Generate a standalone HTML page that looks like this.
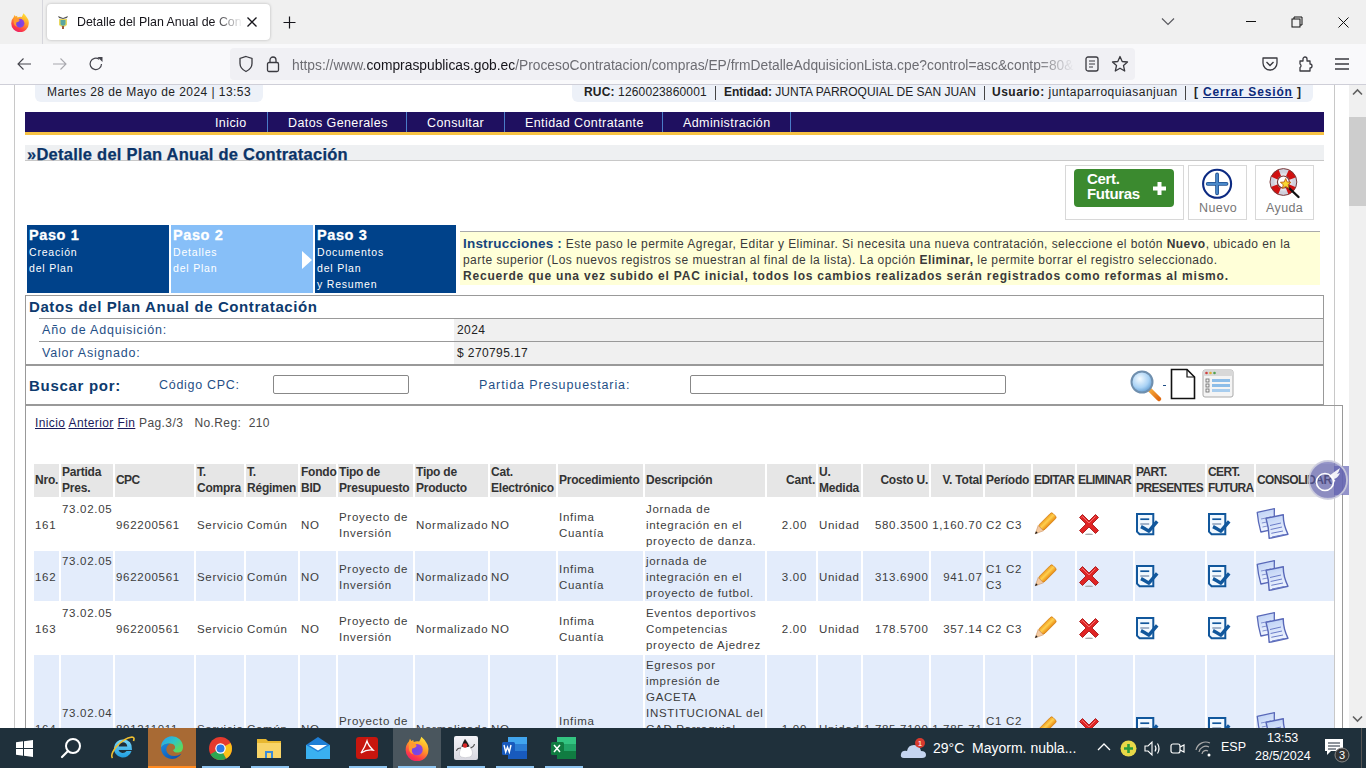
<!DOCTYPE html><html><head><meta charset="utf-8"><style>
*{margin:0;padding:0;box-sizing:border-box}
html,body{width:1366px;height:768px;overflow:hidden;background:#fff;font-family:"Liberation Sans",sans-serif;position:relative}
.a{position:absolute}
.t{position:absolute;white-space:nowrap}
.ff{font-family:"Liberation Sans",sans-serif}
</style></head><body>

<div class="a" style="left:0;top:0;width:1366px;height:44px;background:#f0f0f0"></div>
<div class="a" style="left:0;top:44px;width:1366px;height:40px;background:#f9f9fb"></div>
<div class="a" style="left:0;top:84px;width:1366px;height:1px;background:#cfcfd8"></div>
<svg class="a" style="left:10px;top:12px" width="20" height="20" viewBox="0 0 24 24"><defs><linearGradient id="ffa" x1="0.8" y1="0" x2="0.3" y2="1"><stop offset="0" stop-color="#ffe838"/><stop offset="0.45" stop-color="#ff9a28"/><stop offset="0.8" stop-color="#ff3a48"/><stop offset="1" stop-color="#e8206a"/></linearGradient><radialGradient id="ffap" cx="0.4" cy="0.6" r="0.7"><stop offset="0" stop-color="#6a48e8"/><stop offset="1" stop-color="#9a40d8"/></radialGradient></defs><path d="M16 1.5 Q19 4 20.5 7 Q23 10 22.5 14 A10.5 10.5 0 0 1 1.5 13.5 Q1.5 9 4.5 6 L5.5 3.5 L6.8 5.5 L8.5 4.5 L9 6.5 Q11.5 5.5 14 6 Q15.5 3.5 16 1.5Z" fill="url(#ffa)"/><circle cx="12" cy="13.5" r="5.3" fill="url(#ffap)"/><path d="M4.5 8 Q7 6.5 10 8 Q12.5 9.5 11 11 Q9.5 12 7.5 12.5 Q6.5 16 9 18 Q5 17 4.5 13Z" fill="#ff9a30"/></svg>
<div class="a" style="left:42px;top:0;width:1px;height:44px;background:#d6d6dc"></div>
<div class="a" style="left:47px;top:4px;width:223px;height:36px;background:#fff;border-radius:4px;box-shadow:0 0 3px rgba(0,0,0,0.25)"></div>
<svg class="a" style="left:56px;top:14px" width="14" height="16" viewBox="0 0 14 16">
<path d="M2 2 L7 4 L12 2 L11 4 L7 5 L3 4Z" fill="#555"/><path d="M3 5 H11 V11 Q7 15 3 11Z" fill="#e8d860"/><path d="M4.5 6 H9.5 V10.5 Q7 13 4.5 10.5Z" fill="#5aa6a0"/><rect x="6" y="12" width="2" height="3" fill="#a05a3a"/></svg>
<div class="t" style="left:77px;top:14.5px;font-size:12.4px;color:#15141a;width:166px;overflow:hidden;-webkit-mask-image:linear-gradient(to right,#000 82%,transparent 100%)">Detalle del Plan Anual de Contratación</div>
<svg class="a" style="left:246px;top:16px" width="12" height="12" viewBox="0 0 12 12"><path d="M1.5 1.5 L10.5 10.5 M10.5 1.5 L1.5 10.5" stroke="#15141a" stroke-width="1.3"/></svg>
<svg class="a" style="left:283px;top:16px" width="13" height="13" viewBox="0 0 13 13"><path d="M6.5 0.5 V12.5 M0.5 6.5 H12.5" stroke="#15141a" stroke-width="1.2"/></svg>
<svg class="a" style="left:1161px;top:17px" width="14" height="9" viewBox="0 0 14 9"><path d="M1 1.5 L7 7.5 L13 1.5" stroke="#5a5a60" stroke-width="1.2" fill="none"/></svg>
<div class="a" style="left:1246px;top:21px;width:10px;height:1px;background:#111"></div>
<svg class="a" style="left:1291px;top:16px" width="12" height="12" viewBox="0 0 12 12"><rect x="1" y="3" width="8" height="8" stroke="#111" fill="none" stroke-width="1"/><path d="M3 3 V1 H11 V9 H9" stroke="#111" fill="none" stroke-width="1"/></svg>
<svg class="a" style="left:1338px;top:17px" width="11" height="11" viewBox="0 0 11 11"><path d="M0.5 0.5 L10.5 10.5 M10.5 0.5 L0.5 10.5" stroke="#111" stroke-width="1"/></svg>
<svg class="a" style="left:16px;top:57px" width="16" height="14" viewBox="0 0 16 14"><path d="M15 7 H2 M7.5 1.5 L2 7 L7.5 12.5" stroke="#45454d" stroke-width="1.1" fill="none"/></svg>
<svg class="a" style="left:52px;top:57px" width="16" height="14" viewBox="0 0 16 14"><path d="M1 7 H14 M8.5 1.5 L14 7 L8.5 12.5" stroke="#a8a8ae" stroke-width="1.1" fill="none"/></svg>
<svg class="a" style="left:88px;top:56px" width="16" height="16" viewBox="0 0 16 16"><path d="M13.5 8 A5.7 5.7 0 1 1 11.2 3.3" stroke="#45454d" stroke-width="1.2" fill="none"/><path d="M9.5 1 L14.5 1 L14.5 6 Z" fill="#45454d"/></svg>
<div class="a" style="left:230px;top:48px;width:905px;height:32px;background:#f0f0f4;border-radius:4px"></div>
<svg class="a" style="left:238px;top:55px" width="16" height="18" viewBox="0 0 16 18"><path d="M8 1.5 L14 3.5 V8.5 Q14 13.5 8 16.5 Q2 13.5 2 8.5 V3.5 Z" stroke="#3a3a40" stroke-width="1.3" fill="none"/></svg>
<svg class="a" style="left:266px;top:55px" width="14" height="18" viewBox="0 0 14 18"><rect x="1.5" y="7.5" width="11" height="9" rx="1.5" stroke="#3a3a40" stroke-width="1.3" fill="none"/><path d="M4 7.5 V5 A3 3 0 0 1 10 5 V7.5" stroke="#3a3a40" stroke-width="1.3" fill="none"/></svg>
<div class="t" style="left:292px;top:58px;font-size:13.8px;color:#6d6d73;letter-spacing:0px;width:783px;overflow:hidden;-webkit-mask-image:linear-gradient(to right,#000 95%,transparent 100%)">https://www.<span style="color:#15141a">compraspublicas.gob.ec</span>/ProcesoContratacion/compras/EP/frmDetalleAdquisicionLista.cpe?control=asc&amp;contp=80&amp;</div>
<svg class="a" style="left:1085px;top:56px" width="14" height="16" viewBox="0 0 14 16"><rect x="1" y="1" width="12" height="14" rx="2" stroke="#3a3a40" stroke-width="1.3" fill="none"/><path d="M4 5 H10 M4 8 H10 M4 11 H8" stroke="#3a3a40" stroke-width="1.2"/></svg>
<svg class="a" style="left:1111px;top:55px" width="18" height="18" viewBox="0 0 18 18"><path d="M9 1.5 L11.2 6.5 L16.5 7 L12.5 10.6 L13.7 16 L9 13.2 L4.3 16 L5.5 10.6 L1.5 7 L6.8 6.5 Z" stroke="#3a3a40" stroke-width="1.3" fill="none" stroke-linejoin="round"/></svg>
<svg class="a" style="left:1261px;top:56px" width="18" height="16" viewBox="0 0 18 16"><path d="M2 2 H16 V7 A7 7 0 0 1 2 7 Z" stroke="#3a3a40" stroke-width="1.3" fill="none" stroke-linejoin="round"/><path d="M5.5 6 L9 9.5 L12.5 6" stroke="#3a3a40" stroke-width="1.4" fill="none"/></svg>
<svg class="a" style="left:1298px;top:55px" width="16" height="18" viewBox="0 0 16 18"><path d="M2 6 H5 V4 A2 2 0 0 1 9 4 V6 H12 V9 A2 2 0 0 1 12 13 V16 H2 V12.5 A2 2 0 0 0 2 9 Z" stroke="#3a3a40" stroke-width="1.3" fill="none" stroke-linejoin="round"/></svg>
<svg class="a" style="left:1334px;top:57px" width="16" height="14" viewBox="0 0 16 14"><path d="M1 2 H15 M1 7 H15 M1 12 H15" stroke="#3a3a40" stroke-width="1.4"/></svg>
<div class="a" style="left:14px;top:85px;width:1px;height:643px;background:#c8c8c8"></div>
<div class="a" style="left:1334px;top:85px;width:1px;height:643px;background:#c8c8c8"></div>
<div class="a" style="left:1349px;top:85px;width:17px;height:643px;background:#f0f0f0"></div>
<div class="a" style="left:1349px;top:117px;width:17px;height:89px;background:#cdcdcd"></div>
<svg class="a" style="left:1352px;top:88px" width="11" height="8" viewBox="0 0 11 8"><path d="M1 6.5 L5.5 2 L10 6.5" stroke="#606060" stroke-width="1.6" fill="none"/></svg>
<svg class="a" style="left:1352px;top:715px" width="11" height="8" viewBox="0 0 11 8"><path d="M1 1.5 L5.5 6 L10 1.5" stroke="#606060" stroke-width="1.6" fill="none"/></svg>
<div class="a" style="left:35px;top:85px;width:228px;height:17px;background:#edf1f8;border-radius:0 0 6px 6px"></div>
<div class="t" style="left:47px;top:85px;font-size:12px;color:#222;letter-spacing:0.45px">Martes 28 de Mayo de 2024 | 13:53</div>
<div class="a" style="left:572px;top:85px;width:741px;height:17px;background:#edf1f8;border-radius:0 0 6px 6px"></div>
<div class="t" style="left:584px;top:85px;font-size:12px;color:#222;letter-spacing:0.15px"><b>RUC:</b> 1260023860001</div>
<div class="t" style="left:724px;top:85px;font-size:12px;color:#222;letter-spacing:0.0px"><b>Entidad:</b> JUNTA PARROQUIAL DE SAN JUAN</div>
<div class="t" style="left:992px;top:85px;font-size:12px;color:#222;letter-spacing:0.5px"><b>Usuario:</b> juntaparroquiasanjuan</div>
<div class="t" style="left:1194px;top:85px;font-size:12px;color:#222;letter-spacing:0.85px"><b>[ <span style="color:#0d2a7a;text-decoration:underline">Cerrar Sesión</span> ]</b></div>
<div class="a" style="left:715px;top:86px;width:1px;height:14px;background:#444"></div>
<div class="a" style="left:984px;top:86px;width:1px;height:14px;background:#444"></div>
<div class="a" style="left:1185px;top:86px;width:1px;height:14px;background:#444"></div>
<div class="a" style="left:25px;top:112px;width:1299px;height:20px;background:#1f1060"></div>
<div class="a" style="left:25px;top:132px;width:1299px;height:3px;background:#f6c244"></div>
<div class="a" style="left:267px;top:112px;width:1px;height:20px;background:#4a7cc8"></div>
<div class="a" style="left:406px;top:112px;width:1px;height:20px;background:#4a7cc8"></div>
<div class="a" style="left:504px;top:112px;width:1px;height:20px;background:#4a7cc8"></div>
<div class="a" style="left:662px;top:112px;width:1px;height:20px;background:#4a7cc8"></div>
<div class="a" style="left:790px;top:112px;width:1px;height:20px;background:#4a7cc8"></div>
<div class="t" style="left:215px;top:116px;font-size:12.5px;color:#fff;letter-spacing:0.4px">Inicio</div>
<div class="t" style="left:288px;top:116px;font-size:12.5px;color:#fff;letter-spacing:0.4px">Datos Generales</div>
<div class="t" style="left:427px;top:116px;font-size:12.5px;color:#fff;letter-spacing:0.4px">Consultar</div>
<div class="t" style="left:525px;top:116px;font-size:12.5px;color:#fff;letter-spacing:0.4px">Entidad Contratante</div>
<div class="t" style="left:683px;top:116px;font-size:12.5px;color:#fff;letter-spacing:0.4px">Administración</div>
<div class="a" style="left:25px;top:145px;width:1299px;height:16px;background:#eef0f2;border-bottom:1px solid #c8c8c8"></div>
<div class="t" style="left:27px;top:145px;font-size:16.5px;font-weight:bold;color:#0b3468;letter-spacing:0.25px;-webkit-text-stroke:0.25px #0b3468">&raquo;Detalle del Plan Anual de Contratación</div>
<div class="a" style="left:1065px;top:165px;width:119px;height:55px;border:1px solid #d8d8d8"></div>
<div class="a" style="left:1074px;top:169px;width:100px;height:38px;background:#3b8a2f;border-radius:4px"></div>
<div class="t" style="left:1087px;top:172px;font-size:15px;font-weight:bold;color:#fff;line-height:14.5px;letter-spacing:-0.3px">Cert.<br>Futuras</div>
<svg class="a" style="left:1153px;top:182px" width="13" height="13" viewBox="0 0 13 13"><path d="M6.5 0 V13 M0 6.5 H13" stroke="#fff" stroke-width="4"/></svg>
<div class="a" style="left:1188px;top:165px;width:59px;height:55px;border:1px solid #d8d8d8"></div>
<svg class="a" style="left:1200px;top:167px" width="34" height="34" viewBox="0 0 34 34"><circle cx="17.1" cy="16.8" r="14" fill="#fff" stroke="#0c2a82" stroke-width="2.1"/><path d="M17.1 7.5 V26.3 M7.7 16.8 H26.5" stroke="#1f4f90" stroke-width="3.8" stroke-linecap="round"/><path d="M17.1 7.5 V26.3 M7.7 16.8 H26.5" stroke="#4a88c8" stroke-width="2.2" stroke-linecap="round"/></svg>
<div class="t" style="left:1199px;top:201px;font-size:12.5px;color:#777;letter-spacing:0.4px">Nuevo</div>
<div class="a" style="left:1255px;top:165px;width:59px;height:55px;border:1px solid #d8d8d8"></div>
<svg class="a" style="left:1266px;top:165px" width="36" height="36" viewBox="0 0 36 36"><defs><radialGradient id="lbg" cx="0.5" cy="0.5" r="0.5"><stop offset="0.4" stop-color="#fff"/><stop offset="1" stop-color="#d0d0dc"/></radialGradient></defs>
<circle cx="17.4" cy="17" r="10" fill="none" stroke="url(#lbg)" stroke-width="7"/>
<circle cx="17.4" cy="17" r="10" fill="none" stroke="#d01010" stroke-width="7" stroke-dasharray="7.85 7.85" stroke-dashoffset="-3.9" transform="rotate(0 17.4 17)"/>
<circle cx="17.4" cy="17" r="13.4" fill="none" stroke="#7a3a3a" stroke-width="1"/>
<circle cx="17.4" cy="17" r="6" fill="#fff" stroke="#7a3a3a" stroke-width="1.2"/>
<path d="M22 22 L32.5 32" stroke="#111" stroke-width="2.4" stroke-linecap="round"/>
<path d="M19.7 13.5 L21.2 17 L25 17.3 L22.1 19.7 L23 23.4 L19.7 21.4 L16.4 23.4 L17.3 19.7 L14.4 17.3 L18.2 17 Z" fill="#f8d830" stroke="#c06010" stroke-width="0.9" stroke-linejoin="round"/></svg>
<div class="t" style="left:1266px;top:201px;font-size:12.5px;color:#777;letter-spacing:0.4px">Ayuda</div>
<div class="a" style="left:27px;top:225px;width:142px;height:68px;background:#00428a"></div>
<div class="a" style="left:171px;top:225px;width:142px;height:68px;background:#87bff8"></div>
<div class="a" style="left:315px;top:225px;width:141px;height:68px;background:#00428a"></div>
<div class="t" style="left:29px;top:227px;font-size:14.5px;font-weight:bold;color:#fff;letter-spacing:0.6px;-webkit-text-stroke:0.3px #fff">Paso 1</div>
<div class="t" style="left:29px;top:244px;font-size:10.5px;line-height:16px;color:#fff;letter-spacing:0.8px">Creación<br>del Plan</div>
<div class="t" style="left:173px;top:227px;font-size:14.5px;font-weight:bold;color:#fff;letter-spacing:0.6px;-webkit-text-stroke:0.3px #fff">Paso 2</div>
<div class="t" style="left:173px;top:244px;font-size:10.5px;line-height:16px;color:#fff;letter-spacing:0.8px">Detalles<br>del Plan</div>
<div class="t" style="left:317px;top:227px;font-size:14.5px;font-weight:bold;color:#fff;letter-spacing:0.6px;-webkit-text-stroke:0.3px #fff">Paso 3</div>
<div class="t" style="left:317px;top:244px;font-size:10.5px;line-height:16px;color:#fff;letter-spacing:0.8px">Documentos<br>del Plan<br>y Resumen</div>
<svg class="a" style="left:302px;top:251px" width="10" height="18" viewBox="0 0 10 18"><path d="M0 0 L10 9 L0 18Z" fill="#fff"/></svg>
<div class="a" style="left:460px;top:231px;width:860px;height:54px;background:#ffffd8;border-top:1px solid #aaa"></div>
<div class="t" style="left:463px;top:236px;font-size:12px;line-height:16px;color:#3a3a3a;letter-spacing:0.45px"><b style="color:#17457c;font-size:13.5px;letter-spacing:0.2px">Instrucciones :</b> Este paso le permite Agregar, Editar y Eliminar. Si necesita una nueva contratación, seleccione el botón <b>Nuevo</b>, ubicado en la<br>parte superior (Los nuevos registros se muestran al final de la lista). La opción <b>Eliminar,</b> le permite borrar el registro seleccionado.<br><b style="letter-spacing:0.8px">Recuerde que una vez subido el PAC inicial, todos los cambios realizados serán registrados como reformas al mismo.</b></div>
<div class="a" style="left:25px;top:295px;width:1299px;height:110px;border:1px solid #999;border-width:1px 1px 1px 1px"></div>
<div class="t" style="left:29px;top:298px;font-size:15px;font-weight:bold;color:#0d3a6e;letter-spacing:0.6px">Datos del Plan Anual de Contratación</div>
<div class="a" style="left:39px;top:318px;width:1284px;height:1px;background:#999"></div>
<div class="a" style="left:39px;top:341px;width:1284px;height:1px;background:#999"></div>
<div class="a" style="left:454px;top:319px;width:869px;height:22px;background:#f0f0f0"></div>
<div class="a" style="left:454px;top:342px;width:869px;height:22px;background:#f0f0f0"></div>
<div class="a" style="left:26px;top:364px;width:1297px;height:2px;background:#999"></div>
<div class="t" style="left:42px;top:323px;font-size:12.5px;color:#1f4f86;letter-spacing:0.8px">Año de Adquisición:</div>
<div class="t" style="left:42px;top:346px;font-size:12.5px;color:#1f4f86;letter-spacing:0.8px">Valor Asignado:</div>
<div class="t" style="left:457px;top:323px;font-size:12px;color:#222;letter-spacing:0.4px">2024</div>
<div class="t" style="left:457px;top:346px;font-size:12px;color:#222;letter-spacing:0.4px">$ 270795.17</div>
<div class="t" style="left:29px;top:377px;font-size:15px;font-weight:bold;color:#0d3a6e;letter-spacing:0.7px">Buscar por:</div>
<div class="t" style="left:159px;top:378px;font-size:12.5px;color:#1f4f86;letter-spacing:0.7px">Código CPC:</div>
<div class="a" style="left:273px;top:375px;width:136px;height:19px;border:1px solid #888;border-radius:2px;background:#fff"></div>
<div class="t" style="left:479px;top:378px;font-size:12.5px;color:#1f4f86;letter-spacing:0.9px">Partida Presupuestaria:</div>
<div class="a" style="left:690px;top:375px;width:316px;height:19px;border:1px solid #888;border-radius:2px;background:#fff"></div>
<svg class="a" style="left:1129px;top:369px" width="34" height="34" viewBox="0 0 34 34"><defs><radialGradient id="mg" cx="0.4" cy="0.35" r="0.7"><stop offset="0" stop-color="#f4fbff"/><stop offset="0.6" stop-color="#a9d2f5"/><stop offset="1" stop-color="#5a96cc"/></radialGradient><linearGradient id="hg" x1="0" y1="0" x2="1" y2="1"><stop offset="0" stop-color="#f7b040"/><stop offset="1" stop-color="#e06a10"/></linearGradient></defs><path d="M20 20 L30 30" stroke="url(#hg)" stroke-width="4.5" stroke-linecap="round"/><circle cx="13" cy="13" r="10.5" fill="url(#mg)" stroke="#6f8fae" stroke-width="2"/></svg>
<div class="a" style="left:1163px;top:385px;width:3px;height:1px;background:#1f4f86"></div>
<svg class="a" style="left:1170px;top:368px" width="26" height="32" viewBox="0 0 26 32"><path d="M1.5 1.5 H17 L24.5 9 V30.5 H1.5 Z" fill="#fff" stroke="#111" stroke-width="1.6"/><path d="M17 1.5 V9 H24.5" fill="none" stroke="#111" stroke-width="1.2"/></svg>
<svg class="a" style="left:1202px;top:369px" width="32" height="30" viewBox="0 0 32 30"><rect x="1" y="1" width="30" height="27" rx="2" fill="#f4f4f4" stroke="#aaa"/><rect x="1" y="1" width="30" height="6" rx="2" fill="#d8d8d8"/><circle cx="4.5" cy="4" r="1.3" fill="#d04040"/><circle cx="8.5" cy="4" r="1.3" fill="#e0b030"/><circle cx="12.5" cy="4" r="1.3" fill="#50a050"/><rect x="4" y="10" width="3" height="3" fill="none" stroke="#666" stroke-width="0.8"/><rect x="10" y="10" width="18" height="3" fill="#8cbde8"/><rect x="4" y="15" width="3" height="3" fill="none" stroke="#666" stroke-width="0.8"/><rect x="10" y="15" width="18" height="3" fill="#8cbde8"/><rect x="4" y="20" width="3" height="3" fill="none" stroke="#666" stroke-width="0.8"/><rect x="10" y="20" width="18" height="3" fill="#a8cdee"/></svg>
<div class="a" style="left:25px;top:405px;width:1318px;height:340px;border:1px solid #999;border-bottom:none"></div>
<div class="t" style="left:35px;top:416px;font-size:12px;color:#4a4a4a;letter-spacing:0.4px"><span style="color:#1a1a5a;text-decoration:underline">Inicio</span> <span style="color:#1a1a5a;text-decoration:underline">Anterior</span> <span style="color:#1a1a5a;text-decoration:underline">Fin</span> Pag.3/3 &nbsp; No.Reg: &nbsp;210</div>
<div class="a" style="left:34px;top:464px;width:25px;height:33px;background:#e6e6e6;display:flex;flex-direction:column;justify-content:center;align-items:flex-start;padding:0 0 0 1px"><div style="font-size:12px;font-weight:bold;line-height:16px;color:#333;white-space:nowrap;margin-top:-2px;letter-spacing:-0.22px;text-align:left">Nro.</div></div>
<div class="a" style="left:61px;top:464px;width:52px;height:33px;background:#e6e6e6;display:flex;flex-direction:column;justify-content:center;align-items:flex-start;padding:0 0 0 1px"><div style="font-size:12px;font-weight:bold;line-height:16px;color:#333;white-space:nowrap;margin-top:-2px;letter-spacing:-0.22px;text-align:left">Partida<br>Pres.</div></div>
<div class="a" style="left:115px;top:464px;width:79px;height:33px;background:#e6e6e6;display:flex;flex-direction:column;justify-content:center;align-items:flex-start;padding:0 0 0 1px"><div style="font-size:12px;font-weight:bold;line-height:16px;color:#333;white-space:nowrap;margin-top:-2px;letter-spacing:-0.62px;text-align:left">CPC</div></div>
<div class="a" style="left:196px;top:464px;width:48px;height:33px;background:#e6e6e6;display:flex;flex-direction:column;justify-content:center;align-items:flex-start;padding:0 0 0 1px"><div style="font-size:12px;font-weight:bold;line-height:16px;color:#333;white-space:nowrap;margin-top:-2px;letter-spacing:-0.22px;text-align:left">T.<br>Compra</div></div>
<div class="a" style="left:246px;top:464px;width:52px;height:33px;background:#e6e6e6;display:flex;flex-direction:column;justify-content:center;align-items:flex-start;padding:0 0 0 1px"><div style="font-size:12px;font-weight:bold;line-height:16px;color:#333;white-space:nowrap;margin-top:-2px;letter-spacing:-0.22px;text-align:left">T.<br>Régimen</div></div>
<div class="a" style="left:300px;top:464px;width:36px;height:33px;background:#e6e6e6;display:flex;flex-direction:column;justify-content:center;align-items:flex-start;padding:0 0 0 1px"><div style="font-size:12px;font-weight:bold;line-height:16px;color:#333;white-space:nowrap;margin-top:-2px;letter-spacing:-0.22px;text-align:left">Fondo<br>BID</div></div>
<div class="a" style="left:338px;top:464px;width:75px;height:33px;background:#e6e6e6;display:flex;flex-direction:column;justify-content:center;align-items:flex-start;padding:0 0 0 1px"><div style="font-size:12px;font-weight:bold;line-height:16px;color:#333;white-space:nowrap;margin-top:-2px;letter-spacing:-0.22px;text-align:left">Tipo de<br>Presupuesto</div></div>
<div class="a" style="left:415px;top:464px;width:73px;height:33px;background:#e6e6e6;display:flex;flex-direction:column;justify-content:center;align-items:flex-start;padding:0 0 0 1px"><div style="font-size:12px;font-weight:bold;line-height:16px;color:#333;white-space:nowrap;margin-top:-2px;letter-spacing:-0.22px;text-align:left">Tipo de<br>Producto</div></div>
<div class="a" style="left:490px;top:464px;width:66px;height:33px;background:#e6e6e6;display:flex;flex-direction:column;justify-content:center;align-items:flex-start;padding:0 0 0 1px"><div style="font-size:12px;font-weight:bold;line-height:16px;color:#333;white-space:nowrap;margin-top:-2px;letter-spacing:-0.22px;text-align:left">Cat.<br>Electrónico</div></div>
<div class="a" style="left:558px;top:464px;width:85px;height:33px;background:#e6e6e6;display:flex;flex-direction:column;justify-content:center;align-items:flex-start;padding:0 0 0 1px"><div style="font-size:12px;font-weight:bold;line-height:16px;color:#333;white-space:nowrap;margin-top:-2px;letter-spacing:-0.22px;text-align:left">Procedimiento</div></div>
<div class="a" style="left:645px;top:464px;width:120px;height:33px;background:#e6e6e6;display:flex;flex-direction:column;justify-content:center;align-items:flex-start;padding:0 0 0 1px"><div style="font-size:12px;font-weight:bold;line-height:16px;color:#333;white-space:nowrap;margin-top:-2px;letter-spacing:-0.22px;text-align:left">Descripción</div></div>
<div class="a" style="left:767px;top:464px;width:49px;height:33px;background:#e6e6e6;display:flex;flex-direction:column;justify-content:center;align-items:flex-end;padding:0 1px 0 1px"><div style="font-size:12px;font-weight:bold;line-height:16px;color:#333;white-space:nowrap;margin-top:-2px;letter-spacing:-0.22px;text-align:right">Cant.</div></div>
<div class="a" style="left:818px;top:464px;width:43px;height:33px;background:#e6e6e6;display:flex;flex-direction:column;justify-content:center;align-items:flex-start;padding:0 0 0 1px"><div style="font-size:12px;font-weight:bold;line-height:16px;color:#333;white-space:nowrap;margin-top:-2px;letter-spacing:-0.22px;text-align:left">U.<br>Medida</div></div>
<div class="a" style="left:863px;top:464px;width:66px;height:33px;background:#e6e6e6;display:flex;flex-direction:column;justify-content:center;align-items:flex-end;padding:0 1px 0 1px"><div style="font-size:12px;font-weight:bold;line-height:16px;color:#333;white-space:nowrap;margin-top:-2px;letter-spacing:-0.22px;text-align:right">Costo U.</div></div>
<div class="a" style="left:931px;top:464px;width:52px;height:33px;background:#e6e6e6;display:flex;flex-direction:column;justify-content:center;align-items:flex-end;padding:0 1px 0 1px"><div style="font-size:12px;font-weight:bold;line-height:16px;color:#333;white-space:nowrap;margin-top:-2px;letter-spacing:-0.22px;text-align:right">V. Total</div></div>
<div class="a" style="left:985px;top:464px;width:46px;height:33px;background:#e6e6e6;display:flex;flex-direction:column;justify-content:center;align-items:flex-start;padding:0 0 0 1px"><div style="font-size:12px;font-weight:bold;line-height:16px;color:#333;white-space:nowrap;margin-top:-2px;letter-spacing:-0.22px;text-align:left">Período</div></div>
<div class="a" style="left:1033px;top:464px;width:42px;height:33px;background:#e6e6e6;display:flex;flex-direction:column;justify-content:center;align-items:flex-start;padding:0 0 0 1px"><div style="font-size:12px;font-weight:bold;line-height:16px;color:#333;white-space:nowrap;margin-top:-2px;letter-spacing:-0.62px;text-align:left">EDITAR</div></div>
<div class="a" style="left:1077px;top:464px;width:56px;height:33px;background:#e6e6e6;display:flex;flex-direction:column;justify-content:center;align-items:flex-start;padding:0 0 0 1px"><div style="font-size:12px;font-weight:bold;line-height:16px;color:#333;white-space:nowrap;margin-top:-2px;letter-spacing:-0.62px;text-align:left">ELIMINAR</div></div>
<div class="a" style="left:1135px;top:464px;width:70px;height:33px;background:#e6e6e6;display:flex;flex-direction:column;justify-content:center;align-items:flex-start;padding:0 0 0 1px"><div style="font-size:12px;font-weight:bold;line-height:16px;color:#333;white-space:nowrap;margin-top:-2px;letter-spacing:-0.62px;text-align:left">PART.<br>PRESENTES</div></div>
<div class="a" style="left:1207px;top:464px;width:47px;height:33px;background:#e6e6e6;display:flex;flex-direction:column;justify-content:center;align-items:flex-start;padding:0 0 0 1px"><div style="font-size:12px;font-weight:bold;line-height:16px;color:#333;white-space:nowrap;margin-top:-2px;letter-spacing:-0.62px;text-align:left">CERT.<br>FUTURA</div></div>
<div class="a" style="left:1256px;top:464px;width:78px;height:33px;background:#e6e6e6;display:flex;flex-direction:column;justify-content:center;align-items:flex-start;padding:0 0 0 1px"><div style="font-size:12px;font-weight:bold;line-height:16px;color:#333;white-space:nowrap;margin-top:-2px;letter-spacing:-0.62px;text-align:left">CONSOLIDAR</div></div>
<div class="a" style="left:34px;top:499px;width:25px;height:50px;background:#fff"></div>
<div class="a" style="left:61px;top:499px;width:52px;height:50px;background:#fff"></div>
<div class="a" style="left:115px;top:499px;width:79px;height:50px;background:#fff"></div>
<div class="a" style="left:196px;top:499px;width:48px;height:50px;background:#fff"></div>
<div class="a" style="left:246px;top:499px;width:52px;height:50px;background:#fff"></div>
<div class="a" style="left:300px;top:499px;width:36px;height:50px;background:#fff"></div>
<div class="a" style="left:338px;top:499px;width:75px;height:50px;background:#fff"></div>
<div class="a" style="left:415px;top:499px;width:73px;height:50px;background:#fff"></div>
<div class="a" style="left:490px;top:499px;width:66px;height:50px;background:#fff"></div>
<div class="a" style="left:558px;top:499px;width:85px;height:50px;background:#fff"></div>
<div class="a" style="left:645px;top:499px;width:120px;height:50px;background:#fff"></div>
<div class="a" style="left:767px;top:499px;width:49px;height:50px;background:#fff"></div>
<div class="a" style="left:818px;top:499px;width:43px;height:50px;background:#fff"></div>
<div class="a" style="left:863px;top:499px;width:66px;height:50px;background:#fff"></div>
<div class="a" style="left:931px;top:499px;width:52px;height:50px;background:#fff"></div>
<div class="a" style="left:985px;top:499px;width:46px;height:50px;background:#fff"></div>
<div class="a" style="left:1033px;top:499px;width:42px;height:50px;background:#fff"></div>
<div class="a" style="left:1077px;top:499px;width:56px;height:50px;background:#fff"></div>
<div class="a" style="left:1135px;top:499px;width:70px;height:50px;background:#fff"></div>
<div class="a" style="left:1207px;top:499px;width:47px;height:50px;background:#fff"></div>
<div class="a" style="left:1256px;top:499px;width:78px;height:50px;background:#fff"></div>
<div class="a" style="left:34px;top:499px;width:25px;height:50px;display:flex;flex-direction:column;justify-content:center;align-items:flex-start;padding:0 0 0 1px"><div style="font-size:11.5px;line-height:16px;color:#3c3c3c;white-space:nowrap;letter-spacing:0.7px;margin-top:1px;text-align:left">161</div></div>
<div class="a" style="left:61px;top:499px;width:52px;height:50px;display:flex;flex-direction:column;justify-content:center;align-items:flex-start;padding:0 0 0 1px"><div style="font-size:11.5px;line-height:16px;color:#3c3c3c;white-space:nowrap;letter-spacing:0.7px;margin-top:1px;text-align:left">73.02.05<br>&nbsp;<br>&nbsp;</div></div>
<div class="a" style="left:115px;top:499px;width:79px;height:50px;display:flex;flex-direction:column;justify-content:center;align-items:flex-start;padding:0 0 0 1px"><div style="font-size:11.5px;line-height:16px;color:#3c3c3c;white-space:nowrap;letter-spacing:0.7px;margin-top:1px;text-align:left">962200561</div></div>
<div class="a" style="left:196px;top:499px;width:48px;height:50px;display:flex;flex-direction:column;justify-content:center;align-items:flex-start;padding:0 0 0 1px"><div style="font-size:11.5px;line-height:16px;color:#3c3c3c;white-space:nowrap;letter-spacing:0.7px;margin-top:1px;text-align:left">Servicio</div></div>
<div class="a" style="left:246px;top:499px;width:52px;height:50px;display:flex;flex-direction:column;justify-content:center;align-items:flex-start;padding:0 0 0 1px"><div style="font-size:11.5px;line-height:16px;color:#3c3c3c;white-space:nowrap;letter-spacing:0.7px;margin-top:1px;text-align:left">Común</div></div>
<div class="a" style="left:300px;top:499px;width:36px;height:50px;display:flex;flex-direction:column;justify-content:center;align-items:flex-start;padding:0 0 0 1px"><div style="font-size:11.5px;line-height:16px;color:#3c3c3c;white-space:nowrap;letter-spacing:0.7px;margin-top:1px;text-align:left">NO</div></div>
<div class="a" style="left:338px;top:499px;width:75px;height:50px;display:flex;flex-direction:column;justify-content:center;align-items:flex-start;padding:0 0 0 1px"><div style="font-size:11.5px;line-height:16px;color:#3c3c3c;white-space:nowrap;letter-spacing:0.7px;margin-top:1px;text-align:left">Proyecto de<br>Inversión</div></div>
<div class="a" style="left:415px;top:499px;width:73px;height:50px;display:flex;flex-direction:column;justify-content:center;align-items:flex-start;padding:0 0 0 1px"><div style="font-size:11.5px;line-height:16px;color:#3c3c3c;white-space:nowrap;letter-spacing:0.7px;margin-top:1px;text-align:left">Normalizado</div></div>
<div class="a" style="left:490px;top:499px;width:66px;height:50px;display:flex;flex-direction:column;justify-content:center;align-items:flex-start;padding:0 0 0 1px"><div style="font-size:11.5px;line-height:16px;color:#3c3c3c;white-space:nowrap;letter-spacing:0.7px;margin-top:1px;text-align:left">NO</div></div>
<div class="a" style="left:558px;top:499px;width:85px;height:50px;display:flex;flex-direction:column;justify-content:center;align-items:flex-start;padding:0 0 0 1px"><div style="font-size:11.5px;line-height:16px;color:#3c3c3c;white-space:nowrap;letter-spacing:0.7px;margin-top:1px;text-align:left">Infima<br>Cuantía</div></div>
<div class="a" style="left:645px;top:499px;width:120px;height:50px;display:flex;flex-direction:column;justify-content:center;align-items:flex-start;padding:0 0 0 1px"><div style="font-size:11.5px;line-height:16px;color:#3c3c3c;white-space:nowrap;letter-spacing:0.7px;margin-top:1px;text-align:left">Jornada de<br>integración en el<br>proyecto de danza.</div></div>
<div class="a" style="left:767px;top:499px;width:49px;height:50px;display:flex;flex-direction:column;justify-content:center;align-items:flex-end;padding:0 9px 0 1px"><div style="font-size:11.5px;line-height:16px;color:#3c3c3c;white-space:nowrap;letter-spacing:0.7px;margin-top:1px;text-align:right">2.00</div></div>
<div class="a" style="left:818px;top:499px;width:43px;height:50px;display:flex;flex-direction:column;justify-content:center;align-items:flex-start;padding:0 0 0 1px"><div style="font-size:11.5px;line-height:16px;color:#3c3c3c;white-space:nowrap;letter-spacing:0.7px;margin-top:1px;text-align:left">Unidad</div></div>
<div class="a" style="left:863px;top:499px;width:66px;height:50px;display:flex;flex-direction:column;justify-content:center;align-items:flex-end;padding:0 0.5px 0 1px"><div style="font-size:11.5px;line-height:16px;color:#3c3c3c;white-space:nowrap;letter-spacing:0.7px;margin-top:1px;text-align:right">580.3500</div></div>
<div class="a" style="left:931px;top:499px;width:52px;height:50px;display:flex;flex-direction:column;justify-content:center;align-items:flex-end;padding:0 0.5px 0 1px"><div style="font-size:11.5px;line-height:16px;color:#3c3c3c;white-space:nowrap;letter-spacing:0.7px;margin-top:1px;text-align:right">1,160.70</div></div>
<div class="a" style="left:985px;top:499px;width:46px;height:50px;display:flex;flex-direction:column;justify-content:center;align-items:flex-start;padding:0 0 0 1px"><div style="font-size:11.5px;line-height:16px;color:#3c3c3c;white-space:nowrap;letter-spacing:0.7px;margin-top:1px;text-align:left">C2 C3</div></div>
<div class="a" style="left:1031px;top:512px"><svg width="26" height="26" viewBox="0 0 26 26"><defs><linearGradient id="pg0" x1="0" y1="0" x2="1" y2="0"><stop offset="0" stop-color="#f0a020"/><stop offset="0.45" stop-color="#ffd050"/><stop offset="1" stop-color="#e88a10"/></linearGradient></defs><g transform="rotate(45 13 13)"><rect x="9.3" y="-1.5" width="7.4" height="19" rx="2" fill="url(#pg0)" stroke="#d07a10" stroke-width="0.7"/><path d="M9.3 17.5 L16.7 17.5 L13 25.5 Z" fill="#f4caa0" stroke="#c88a58" stroke-width="0.5"/><path d="M11.8 23 L14.2 23 L13 25.8Z" fill="#1a1a1a"/></g></svg></div>
<div class="a" style="left:1078px;top:513px"><svg width="22" height="22" viewBox="0 0 22 22"><ellipse cx="11" cy="21.3" rx="4" ry="0.8" fill="#aaa"/><path d="M1.5 4.5 L4.5 1.5 L11 8 L17.5 1.5 L20.5 4.5 L14 11 L20.5 17.5 L17.5 20.5 L11 14 L4.5 20.5 L1.5 17.5 L8 11 Z" fill="#e02424" stroke="#a81818" stroke-width="0.9" stroke-linejoin="round"/><path d="M3.5 4.5 L4.5 3.5 L11 10 L17.5 3.5" stroke="#f47a7a" stroke-width="0.9" fill="none"/></svg></div>
<div class="a" style="left:1135px;top:512px"><svg width="24" height="24" viewBox="0 0 24 24"><path d="M2 2 H18.3 V22.2 H4.6 L2 19.6 Z" fill="#f2f9ff" stroke="#11579c" stroke-width="2"/><path d="M5.3 7.2 H14.2" stroke="#11579c" stroke-width="1.7"/><path d="M5.3 12 H14.2" stroke="#8fa3bd" stroke-width="1.6"/><path d="M6 14.6 Q9 16 13.8 19.2 L22.2 9.4" stroke="#11579c" stroke-width="3.4" fill="none" stroke-linejoin="round"/></svg></div>
<div class="a" style="left:1207px;top:512px"><svg width="24" height="24" viewBox="0 0 24 24"><path d="M2 2 H18.3 V22.2 H4.6 L2 19.6 Z" fill="#f2f9ff" stroke="#11579c" stroke-width="2"/><path d="M5.3 7.2 H14.2" stroke="#11579c" stroke-width="1.7"/><path d="M5.3 12 H14.2" stroke="#8fa3bd" stroke-width="1.6"/><path d="M6 14.6 Q9 16 13.8 19.2 L22.2 9.4" stroke="#11579c" stroke-width="3.4" fill="none" stroke-linejoin="round"/></svg></div>
<div class="a" style="left:1255px;top:507px"><svg width="36" height="36" viewBox="0 0 36 36"><defs><linearGradient id="cg0" x1="0" y1="0" x2="0.3" y2="1"><stop offset="0" stop-color="#b8cdf4"/><stop offset="1" stop-color="#f0f5ff"/></linearGradient></defs><path d="M2.2 5.3 L19.4 1.7 Q19 12 20 22 L5.9 25 Q3 15 2.2 5.3Z" fill="url(#cg0)" stroke="#5868b8" stroke-width="1.3" stroke-linejoin="round"/><path d="M6 12 L16 10 M6.8 16 L16.5 14 M7.5 20 L17 18" stroke="#7888cc" stroke-width="0.9"/><path d="M11 11.3 L28.3 7.7 Q28 17 33 27.2 L14.2 31.4 Q14 21 11 11.3Z" fill="url(#cg0)" stroke="#5868b8" stroke-width="1.4" stroke-linejoin="round"/><path d="M15 18.5 L26 16 M15.6 22.5 L27 20 M16.3 26.3 L28 24 M17 30 L29.5 27.5" stroke="#6a7cc8" stroke-width="1"/></svg></div>
<div class="a" style="left:34px;top:551px;width:25px;height:50px;background:#e3ecfb"></div>
<div class="a" style="left:61px;top:551px;width:52px;height:50px;background:#e3ecfb"></div>
<div class="a" style="left:115px;top:551px;width:79px;height:50px;background:#e3ecfb"></div>
<div class="a" style="left:196px;top:551px;width:48px;height:50px;background:#e3ecfb"></div>
<div class="a" style="left:246px;top:551px;width:52px;height:50px;background:#e3ecfb"></div>
<div class="a" style="left:300px;top:551px;width:36px;height:50px;background:#e3ecfb"></div>
<div class="a" style="left:338px;top:551px;width:75px;height:50px;background:#e3ecfb"></div>
<div class="a" style="left:415px;top:551px;width:73px;height:50px;background:#e3ecfb"></div>
<div class="a" style="left:490px;top:551px;width:66px;height:50px;background:#e3ecfb"></div>
<div class="a" style="left:558px;top:551px;width:85px;height:50px;background:#e3ecfb"></div>
<div class="a" style="left:645px;top:551px;width:120px;height:50px;background:#e3ecfb"></div>
<div class="a" style="left:767px;top:551px;width:49px;height:50px;background:#e3ecfb"></div>
<div class="a" style="left:818px;top:551px;width:43px;height:50px;background:#e3ecfb"></div>
<div class="a" style="left:863px;top:551px;width:66px;height:50px;background:#e3ecfb"></div>
<div class="a" style="left:931px;top:551px;width:52px;height:50px;background:#e3ecfb"></div>
<div class="a" style="left:985px;top:551px;width:46px;height:50px;background:#e3ecfb"></div>
<div class="a" style="left:1033px;top:551px;width:42px;height:50px;background:#e3ecfb"></div>
<div class="a" style="left:1077px;top:551px;width:56px;height:50px;background:#e3ecfb"></div>
<div class="a" style="left:1135px;top:551px;width:70px;height:50px;background:#e3ecfb"></div>
<div class="a" style="left:1207px;top:551px;width:47px;height:50px;background:#e3ecfb"></div>
<div class="a" style="left:1256px;top:551px;width:78px;height:50px;background:#e3ecfb"></div>
<div class="a" style="left:34px;top:551px;width:25px;height:50px;display:flex;flex-direction:column;justify-content:center;align-items:flex-start;padding:0 0 0 1px"><div style="font-size:11.5px;line-height:16px;color:#3c3c3c;white-space:nowrap;letter-spacing:0.7px;margin-top:1px;text-align:left">162</div></div>
<div class="a" style="left:61px;top:551px;width:52px;height:50px;display:flex;flex-direction:column;justify-content:center;align-items:flex-start;padding:0 0 0 1px"><div style="font-size:11.5px;line-height:16px;color:#3c3c3c;white-space:nowrap;letter-spacing:0.7px;margin-top:1px;text-align:left">73.02.05<br>&nbsp;<br>&nbsp;</div></div>
<div class="a" style="left:115px;top:551px;width:79px;height:50px;display:flex;flex-direction:column;justify-content:center;align-items:flex-start;padding:0 0 0 1px"><div style="font-size:11.5px;line-height:16px;color:#3c3c3c;white-space:nowrap;letter-spacing:0.7px;margin-top:1px;text-align:left">962200561</div></div>
<div class="a" style="left:196px;top:551px;width:48px;height:50px;display:flex;flex-direction:column;justify-content:center;align-items:flex-start;padding:0 0 0 1px"><div style="font-size:11.5px;line-height:16px;color:#3c3c3c;white-space:nowrap;letter-spacing:0.7px;margin-top:1px;text-align:left">Servicio</div></div>
<div class="a" style="left:246px;top:551px;width:52px;height:50px;display:flex;flex-direction:column;justify-content:center;align-items:flex-start;padding:0 0 0 1px"><div style="font-size:11.5px;line-height:16px;color:#3c3c3c;white-space:nowrap;letter-spacing:0.7px;margin-top:1px;text-align:left">Común</div></div>
<div class="a" style="left:300px;top:551px;width:36px;height:50px;display:flex;flex-direction:column;justify-content:center;align-items:flex-start;padding:0 0 0 1px"><div style="font-size:11.5px;line-height:16px;color:#3c3c3c;white-space:nowrap;letter-spacing:0.7px;margin-top:1px;text-align:left">NO</div></div>
<div class="a" style="left:338px;top:551px;width:75px;height:50px;display:flex;flex-direction:column;justify-content:center;align-items:flex-start;padding:0 0 0 1px"><div style="font-size:11.5px;line-height:16px;color:#3c3c3c;white-space:nowrap;letter-spacing:0.7px;margin-top:1px;text-align:left">Proyecto de<br>Inversión</div></div>
<div class="a" style="left:415px;top:551px;width:73px;height:50px;display:flex;flex-direction:column;justify-content:center;align-items:flex-start;padding:0 0 0 1px"><div style="font-size:11.5px;line-height:16px;color:#3c3c3c;white-space:nowrap;letter-spacing:0.7px;margin-top:1px;text-align:left">Normalizado</div></div>
<div class="a" style="left:490px;top:551px;width:66px;height:50px;display:flex;flex-direction:column;justify-content:center;align-items:flex-start;padding:0 0 0 1px"><div style="font-size:11.5px;line-height:16px;color:#3c3c3c;white-space:nowrap;letter-spacing:0.7px;margin-top:1px;text-align:left">NO</div></div>
<div class="a" style="left:558px;top:551px;width:85px;height:50px;display:flex;flex-direction:column;justify-content:center;align-items:flex-start;padding:0 0 0 1px"><div style="font-size:11.5px;line-height:16px;color:#3c3c3c;white-space:nowrap;letter-spacing:0.7px;margin-top:1px;text-align:left">Infima<br>Cuantía</div></div>
<div class="a" style="left:645px;top:551px;width:120px;height:50px;display:flex;flex-direction:column;justify-content:center;align-items:flex-start;padding:0 0 0 1px"><div style="font-size:11.5px;line-height:16px;color:#3c3c3c;white-space:nowrap;letter-spacing:0.7px;margin-top:1px;text-align:left">jornada de<br>integración en el<br>proyecto de futbol.</div></div>
<div class="a" style="left:767px;top:551px;width:49px;height:50px;display:flex;flex-direction:column;justify-content:center;align-items:flex-end;padding:0 9px 0 1px"><div style="font-size:11.5px;line-height:16px;color:#3c3c3c;white-space:nowrap;letter-spacing:0.7px;margin-top:1px;text-align:right">3.00</div></div>
<div class="a" style="left:818px;top:551px;width:43px;height:50px;display:flex;flex-direction:column;justify-content:center;align-items:flex-start;padding:0 0 0 1px"><div style="font-size:11.5px;line-height:16px;color:#3c3c3c;white-space:nowrap;letter-spacing:0.7px;margin-top:1px;text-align:left">Unidad</div></div>
<div class="a" style="left:863px;top:551px;width:66px;height:50px;display:flex;flex-direction:column;justify-content:center;align-items:flex-end;padding:0 0.5px 0 1px"><div style="font-size:11.5px;line-height:16px;color:#3c3c3c;white-space:nowrap;letter-spacing:0.7px;margin-top:1px;text-align:right">313.6900</div></div>
<div class="a" style="left:931px;top:551px;width:52px;height:50px;display:flex;flex-direction:column;justify-content:center;align-items:flex-end;padding:0 0.5px 0 1px"><div style="font-size:11.5px;line-height:16px;color:#3c3c3c;white-space:nowrap;letter-spacing:0.7px;margin-top:1px;text-align:right">941.07</div></div>
<div class="a" style="left:985px;top:551px;width:46px;height:50px;display:flex;flex-direction:column;justify-content:center;align-items:flex-start;padding:0 0 0 1px"><div style="font-size:11.5px;line-height:16px;color:#3c3c3c;white-space:nowrap;letter-spacing:0.7px;margin-top:1px;text-align:left">C1 C2<br>C3</div></div>
<div class="a" style="left:1031px;top:564px"><svg width="26" height="26" viewBox="0 0 26 26"><defs><linearGradient id="pg1" x1="0" y1="0" x2="1" y2="0"><stop offset="0" stop-color="#f0a020"/><stop offset="0.45" stop-color="#ffd050"/><stop offset="1" stop-color="#e88a10"/></linearGradient></defs><g transform="rotate(45 13 13)"><rect x="9.3" y="-1.5" width="7.4" height="19" rx="2" fill="url(#pg1)" stroke="#d07a10" stroke-width="0.7"/><path d="M9.3 17.5 L16.7 17.5 L13 25.5 Z" fill="#f4caa0" stroke="#c88a58" stroke-width="0.5"/><path d="M11.8 23 L14.2 23 L13 25.8Z" fill="#1a1a1a"/></g></svg></div>
<div class="a" style="left:1078px;top:565px"><svg width="22" height="22" viewBox="0 0 22 22"><ellipse cx="11" cy="21.3" rx="4" ry="0.8" fill="#aaa"/><path d="M1.5 4.5 L4.5 1.5 L11 8 L17.5 1.5 L20.5 4.5 L14 11 L20.5 17.5 L17.5 20.5 L11 14 L4.5 20.5 L1.5 17.5 L8 11 Z" fill="#e02424" stroke="#a81818" stroke-width="0.9" stroke-linejoin="round"/><path d="M3.5 4.5 L4.5 3.5 L11 10 L17.5 3.5" stroke="#f47a7a" stroke-width="0.9" fill="none"/></svg></div>
<div class="a" style="left:1135px;top:564px"><svg width="24" height="24" viewBox="0 0 24 24"><path d="M2 2 H18.3 V22.2 H4.6 L2 19.6 Z" fill="#f2f9ff" stroke="#11579c" stroke-width="2"/><path d="M5.3 7.2 H14.2" stroke="#11579c" stroke-width="1.7"/><path d="M5.3 12 H14.2" stroke="#8fa3bd" stroke-width="1.6"/><path d="M6 14.6 Q9 16 13.8 19.2 L22.2 9.4" stroke="#11579c" stroke-width="3.4" fill="none" stroke-linejoin="round"/></svg></div>
<div class="a" style="left:1207px;top:564px"><svg width="24" height="24" viewBox="0 0 24 24"><path d="M2 2 H18.3 V22.2 H4.6 L2 19.6 Z" fill="#f2f9ff" stroke="#11579c" stroke-width="2"/><path d="M5.3 7.2 H14.2" stroke="#11579c" stroke-width="1.7"/><path d="M5.3 12 H14.2" stroke="#8fa3bd" stroke-width="1.6"/><path d="M6 14.6 Q9 16 13.8 19.2 L22.2 9.4" stroke="#11579c" stroke-width="3.4" fill="none" stroke-linejoin="round"/></svg></div>
<div class="a" style="left:1255px;top:559px"><svg width="36" height="36" viewBox="0 0 36 36"><defs><linearGradient id="cg1" x1="0" y1="0" x2="0.3" y2="1"><stop offset="0" stop-color="#b8cdf4"/><stop offset="1" stop-color="#f0f5ff"/></linearGradient></defs><path d="M2.2 5.3 L19.4 1.7 Q19 12 20 22 L5.9 25 Q3 15 2.2 5.3Z" fill="url(#cg1)" stroke="#5868b8" stroke-width="1.3" stroke-linejoin="round"/><path d="M6 12 L16 10 M6.8 16 L16.5 14 M7.5 20 L17 18" stroke="#7888cc" stroke-width="0.9"/><path d="M11 11.3 L28.3 7.7 Q28 17 33 27.2 L14.2 31.4 Q14 21 11 11.3Z" fill="url(#cg1)" stroke="#5868b8" stroke-width="1.4" stroke-linejoin="round"/><path d="M15 18.5 L26 16 M15.6 22.5 L27 20 M16.3 26.3 L28 24 M17 30 L29.5 27.5" stroke="#6a7cc8" stroke-width="1"/></svg></div>
<div class="a" style="left:34px;top:603px;width:25px;height:50px;background:#fff"></div>
<div class="a" style="left:61px;top:603px;width:52px;height:50px;background:#fff"></div>
<div class="a" style="left:115px;top:603px;width:79px;height:50px;background:#fff"></div>
<div class="a" style="left:196px;top:603px;width:48px;height:50px;background:#fff"></div>
<div class="a" style="left:246px;top:603px;width:52px;height:50px;background:#fff"></div>
<div class="a" style="left:300px;top:603px;width:36px;height:50px;background:#fff"></div>
<div class="a" style="left:338px;top:603px;width:75px;height:50px;background:#fff"></div>
<div class="a" style="left:415px;top:603px;width:73px;height:50px;background:#fff"></div>
<div class="a" style="left:490px;top:603px;width:66px;height:50px;background:#fff"></div>
<div class="a" style="left:558px;top:603px;width:85px;height:50px;background:#fff"></div>
<div class="a" style="left:645px;top:603px;width:120px;height:50px;background:#fff"></div>
<div class="a" style="left:767px;top:603px;width:49px;height:50px;background:#fff"></div>
<div class="a" style="left:818px;top:603px;width:43px;height:50px;background:#fff"></div>
<div class="a" style="left:863px;top:603px;width:66px;height:50px;background:#fff"></div>
<div class="a" style="left:931px;top:603px;width:52px;height:50px;background:#fff"></div>
<div class="a" style="left:985px;top:603px;width:46px;height:50px;background:#fff"></div>
<div class="a" style="left:1033px;top:603px;width:42px;height:50px;background:#fff"></div>
<div class="a" style="left:1077px;top:603px;width:56px;height:50px;background:#fff"></div>
<div class="a" style="left:1135px;top:603px;width:70px;height:50px;background:#fff"></div>
<div class="a" style="left:1207px;top:603px;width:47px;height:50px;background:#fff"></div>
<div class="a" style="left:1256px;top:603px;width:78px;height:50px;background:#fff"></div>
<div class="a" style="left:34px;top:603px;width:25px;height:50px;display:flex;flex-direction:column;justify-content:center;align-items:flex-start;padding:0 0 0 1px"><div style="font-size:11.5px;line-height:16px;color:#3c3c3c;white-space:nowrap;letter-spacing:0.7px;margin-top:1px;text-align:left">163</div></div>
<div class="a" style="left:61px;top:603px;width:52px;height:50px;display:flex;flex-direction:column;justify-content:center;align-items:flex-start;padding:0 0 0 1px"><div style="font-size:11.5px;line-height:16px;color:#3c3c3c;white-space:nowrap;letter-spacing:0.7px;margin-top:1px;text-align:left">73.02.05<br>&nbsp;<br>&nbsp;</div></div>
<div class="a" style="left:115px;top:603px;width:79px;height:50px;display:flex;flex-direction:column;justify-content:center;align-items:flex-start;padding:0 0 0 1px"><div style="font-size:11.5px;line-height:16px;color:#3c3c3c;white-space:nowrap;letter-spacing:0.7px;margin-top:1px;text-align:left">962200561</div></div>
<div class="a" style="left:196px;top:603px;width:48px;height:50px;display:flex;flex-direction:column;justify-content:center;align-items:flex-start;padding:0 0 0 1px"><div style="font-size:11.5px;line-height:16px;color:#3c3c3c;white-space:nowrap;letter-spacing:0.7px;margin-top:1px;text-align:left">Servicio</div></div>
<div class="a" style="left:246px;top:603px;width:52px;height:50px;display:flex;flex-direction:column;justify-content:center;align-items:flex-start;padding:0 0 0 1px"><div style="font-size:11.5px;line-height:16px;color:#3c3c3c;white-space:nowrap;letter-spacing:0.7px;margin-top:1px;text-align:left">Común</div></div>
<div class="a" style="left:300px;top:603px;width:36px;height:50px;display:flex;flex-direction:column;justify-content:center;align-items:flex-start;padding:0 0 0 1px"><div style="font-size:11.5px;line-height:16px;color:#3c3c3c;white-space:nowrap;letter-spacing:0.7px;margin-top:1px;text-align:left">NO</div></div>
<div class="a" style="left:338px;top:603px;width:75px;height:50px;display:flex;flex-direction:column;justify-content:center;align-items:flex-start;padding:0 0 0 1px"><div style="font-size:11.5px;line-height:16px;color:#3c3c3c;white-space:nowrap;letter-spacing:0.7px;margin-top:1px;text-align:left">Proyecto de<br>Inversión</div></div>
<div class="a" style="left:415px;top:603px;width:73px;height:50px;display:flex;flex-direction:column;justify-content:center;align-items:flex-start;padding:0 0 0 1px"><div style="font-size:11.5px;line-height:16px;color:#3c3c3c;white-space:nowrap;letter-spacing:0.7px;margin-top:1px;text-align:left">Normalizado</div></div>
<div class="a" style="left:490px;top:603px;width:66px;height:50px;display:flex;flex-direction:column;justify-content:center;align-items:flex-start;padding:0 0 0 1px"><div style="font-size:11.5px;line-height:16px;color:#3c3c3c;white-space:nowrap;letter-spacing:0.7px;margin-top:1px;text-align:left">NO</div></div>
<div class="a" style="left:558px;top:603px;width:85px;height:50px;display:flex;flex-direction:column;justify-content:center;align-items:flex-start;padding:0 0 0 1px"><div style="font-size:11.5px;line-height:16px;color:#3c3c3c;white-space:nowrap;letter-spacing:0.7px;margin-top:1px;text-align:left">Infima<br>Cuantía</div></div>
<div class="a" style="left:645px;top:603px;width:120px;height:50px;display:flex;flex-direction:column;justify-content:center;align-items:flex-start;padding:0 0 0 1px"><div style="font-size:11.5px;line-height:16px;color:#3c3c3c;white-space:nowrap;letter-spacing:0.7px;margin-top:1px;text-align:left">Eventos deportivos<br>Competencias<br>proyecto de Ajedrez</div></div>
<div class="a" style="left:767px;top:603px;width:49px;height:50px;display:flex;flex-direction:column;justify-content:center;align-items:flex-end;padding:0 9px 0 1px"><div style="font-size:11.5px;line-height:16px;color:#3c3c3c;white-space:nowrap;letter-spacing:0.7px;margin-top:1px;text-align:right">2.00</div></div>
<div class="a" style="left:818px;top:603px;width:43px;height:50px;display:flex;flex-direction:column;justify-content:center;align-items:flex-start;padding:0 0 0 1px"><div style="font-size:11.5px;line-height:16px;color:#3c3c3c;white-space:nowrap;letter-spacing:0.7px;margin-top:1px;text-align:left">Unidad</div></div>
<div class="a" style="left:863px;top:603px;width:66px;height:50px;display:flex;flex-direction:column;justify-content:center;align-items:flex-end;padding:0 0.5px 0 1px"><div style="font-size:11.5px;line-height:16px;color:#3c3c3c;white-space:nowrap;letter-spacing:0.7px;margin-top:1px;text-align:right">178.5700</div></div>
<div class="a" style="left:931px;top:603px;width:52px;height:50px;display:flex;flex-direction:column;justify-content:center;align-items:flex-end;padding:0 0.5px 0 1px"><div style="font-size:11.5px;line-height:16px;color:#3c3c3c;white-space:nowrap;letter-spacing:0.7px;margin-top:1px;text-align:right">357.14</div></div>
<div class="a" style="left:985px;top:603px;width:46px;height:50px;display:flex;flex-direction:column;justify-content:center;align-items:flex-start;padding:0 0 0 1px"><div style="font-size:11.5px;line-height:16px;color:#3c3c3c;white-space:nowrap;letter-spacing:0.7px;margin-top:1px;text-align:left">C2 C3</div></div>
<div class="a" style="left:1031px;top:616px"><svg width="26" height="26" viewBox="0 0 26 26"><defs><linearGradient id="pg2" x1="0" y1="0" x2="1" y2="0"><stop offset="0" stop-color="#f0a020"/><stop offset="0.45" stop-color="#ffd050"/><stop offset="1" stop-color="#e88a10"/></linearGradient></defs><g transform="rotate(45 13 13)"><rect x="9.3" y="-1.5" width="7.4" height="19" rx="2" fill="url(#pg2)" stroke="#d07a10" stroke-width="0.7"/><path d="M9.3 17.5 L16.7 17.5 L13 25.5 Z" fill="#f4caa0" stroke="#c88a58" stroke-width="0.5"/><path d="M11.8 23 L14.2 23 L13 25.8Z" fill="#1a1a1a"/></g></svg></div>
<div class="a" style="left:1078px;top:617px"><svg width="22" height="22" viewBox="0 0 22 22"><ellipse cx="11" cy="21.3" rx="4" ry="0.8" fill="#aaa"/><path d="M1.5 4.5 L4.5 1.5 L11 8 L17.5 1.5 L20.5 4.5 L14 11 L20.5 17.5 L17.5 20.5 L11 14 L4.5 20.5 L1.5 17.5 L8 11 Z" fill="#e02424" stroke="#a81818" stroke-width="0.9" stroke-linejoin="round"/><path d="M3.5 4.5 L4.5 3.5 L11 10 L17.5 3.5" stroke="#f47a7a" stroke-width="0.9" fill="none"/></svg></div>
<div class="a" style="left:1135px;top:616px"><svg width="24" height="24" viewBox="0 0 24 24"><path d="M2 2 H18.3 V22.2 H4.6 L2 19.6 Z" fill="#f2f9ff" stroke="#11579c" stroke-width="2"/><path d="M5.3 7.2 H14.2" stroke="#11579c" stroke-width="1.7"/><path d="M5.3 12 H14.2" stroke="#8fa3bd" stroke-width="1.6"/><path d="M6 14.6 Q9 16 13.8 19.2 L22.2 9.4" stroke="#11579c" stroke-width="3.4" fill="none" stroke-linejoin="round"/></svg></div>
<div class="a" style="left:1207px;top:616px"><svg width="24" height="24" viewBox="0 0 24 24"><path d="M2 2 H18.3 V22.2 H4.6 L2 19.6 Z" fill="#f2f9ff" stroke="#11579c" stroke-width="2"/><path d="M5.3 7.2 H14.2" stroke="#11579c" stroke-width="1.7"/><path d="M5.3 12 H14.2" stroke="#8fa3bd" stroke-width="1.6"/><path d="M6 14.6 Q9 16 13.8 19.2 L22.2 9.4" stroke="#11579c" stroke-width="3.4" fill="none" stroke-linejoin="round"/></svg></div>
<div class="a" style="left:1255px;top:611px"><svg width="36" height="36" viewBox="0 0 36 36"><defs><linearGradient id="cg2" x1="0" y1="0" x2="0.3" y2="1"><stop offset="0" stop-color="#b8cdf4"/><stop offset="1" stop-color="#f0f5ff"/></linearGradient></defs><path d="M2.2 5.3 L19.4 1.7 Q19 12 20 22 L5.9 25 Q3 15 2.2 5.3Z" fill="url(#cg2)" stroke="#5868b8" stroke-width="1.3" stroke-linejoin="round"/><path d="M6 12 L16 10 M6.8 16 L16.5 14 M7.5 20 L17 18" stroke="#7888cc" stroke-width="0.9"/><path d="M11 11.3 L28.3 7.7 Q28 17 33 27.2 L14.2 31.4 Q14 21 11 11.3Z" fill="url(#cg2)" stroke="#5868b8" stroke-width="1.4" stroke-linejoin="round"/><path d="M15 18.5 L26 16 M15.6 22.5 L27 20 M16.3 26.3 L28 24 M17 30 L29.5 27.5" stroke="#6a7cc8" stroke-width="1"/></svg></div>
<div class="a" style="left:34px;top:655px;width:25px;height:146px;background:#e3ecfb"></div>
<div class="a" style="left:61px;top:655px;width:52px;height:146px;background:#e3ecfb"></div>
<div class="a" style="left:115px;top:655px;width:79px;height:146px;background:#e3ecfb"></div>
<div class="a" style="left:196px;top:655px;width:48px;height:146px;background:#e3ecfb"></div>
<div class="a" style="left:246px;top:655px;width:52px;height:146px;background:#e3ecfb"></div>
<div class="a" style="left:300px;top:655px;width:36px;height:146px;background:#e3ecfb"></div>
<div class="a" style="left:338px;top:655px;width:75px;height:146px;background:#e3ecfb"></div>
<div class="a" style="left:415px;top:655px;width:73px;height:146px;background:#e3ecfb"></div>
<div class="a" style="left:490px;top:655px;width:66px;height:146px;background:#e3ecfb"></div>
<div class="a" style="left:558px;top:655px;width:85px;height:146px;background:#e3ecfb"></div>
<div class="a" style="left:645px;top:655px;width:120px;height:146px;background:#e3ecfb"></div>
<div class="a" style="left:767px;top:655px;width:49px;height:146px;background:#e3ecfb"></div>
<div class="a" style="left:818px;top:655px;width:43px;height:146px;background:#e3ecfb"></div>
<div class="a" style="left:863px;top:655px;width:66px;height:146px;background:#e3ecfb"></div>
<div class="a" style="left:931px;top:655px;width:52px;height:146px;background:#e3ecfb"></div>
<div class="a" style="left:985px;top:655px;width:46px;height:146px;background:#e3ecfb"></div>
<div class="a" style="left:1033px;top:655px;width:42px;height:146px;background:#e3ecfb"></div>
<div class="a" style="left:1077px;top:655px;width:56px;height:146px;background:#e3ecfb"></div>
<div class="a" style="left:1135px;top:655px;width:70px;height:146px;background:#e3ecfb"></div>
<div class="a" style="left:1207px;top:655px;width:47px;height:146px;background:#e3ecfb"></div>
<div class="a" style="left:1256px;top:655px;width:78px;height:146px;background:#e3ecfb"></div>
<div class="a" style="left:34px;top:655px;width:25px;height:146px;display:flex;flex-direction:column;justify-content:center;align-items:flex-start;padding:0 0 0 1px"><div style="font-size:11.5px;line-height:16px;color:#3c3c3c;white-space:nowrap;letter-spacing:0.7px;margin-top:1px;text-align:left">164</div></div>
<div class="a" style="left:61px;top:655px;width:52px;height:146px;display:flex;flex-direction:column;justify-content:center;align-items:flex-start;padding:0 0 0 1px"><div style="font-size:11.5px;line-height:16px;color:#3c3c3c;white-space:nowrap;letter-spacing:0.7px;margin-top:1px;text-align:left">73.02.04<br>&nbsp;<br>&nbsp;</div></div>
<div class="a" style="left:115px;top:655px;width:79px;height:146px;display:flex;flex-direction:column;justify-content:center;align-items:flex-start;padding:0 0 0 1px"><div style="font-size:11.5px;line-height:16px;color:#3c3c3c;white-space:nowrap;letter-spacing:0.7px;margin-top:1px;text-align:left">801211011</div></div>
<div class="a" style="left:196px;top:655px;width:48px;height:146px;display:flex;flex-direction:column;justify-content:center;align-items:flex-start;padding:0 0 0 1px"><div style="font-size:11.5px;line-height:16px;color:#3c3c3c;white-space:nowrap;letter-spacing:0.7px;margin-top:1px;text-align:left">Servicio</div></div>
<div class="a" style="left:246px;top:655px;width:52px;height:146px;display:flex;flex-direction:column;justify-content:center;align-items:flex-start;padding:0 0 0 1px"><div style="font-size:11.5px;line-height:16px;color:#3c3c3c;white-space:nowrap;letter-spacing:0.7px;margin-top:1px;text-align:left">Común</div></div>
<div class="a" style="left:300px;top:655px;width:36px;height:146px;display:flex;flex-direction:column;justify-content:center;align-items:flex-start;padding:0 0 0 1px"><div style="font-size:11.5px;line-height:16px;color:#3c3c3c;white-space:nowrap;letter-spacing:0.7px;margin-top:1px;text-align:left">NO</div></div>
<div class="a" style="left:338px;top:655px;width:75px;height:146px;display:flex;flex-direction:column;justify-content:center;align-items:flex-start;padding:0 0 0 1px"><div style="font-size:11.5px;line-height:16px;color:#3c3c3c;white-space:nowrap;letter-spacing:0.7px;margin-top:1px;text-align:left">Proyecto de<br>Inversión</div></div>
<div class="a" style="left:415px;top:655px;width:73px;height:146px;display:flex;flex-direction:column;justify-content:center;align-items:flex-start;padding:0 0 0 1px"><div style="font-size:11.5px;line-height:16px;color:#3c3c3c;white-space:nowrap;letter-spacing:0.7px;margin-top:1px;text-align:left">Normalizado</div></div>
<div class="a" style="left:490px;top:655px;width:66px;height:146px;display:flex;flex-direction:column;justify-content:center;align-items:flex-start;padding:0 0 0 1px"><div style="font-size:11.5px;line-height:16px;color:#3c3c3c;white-space:nowrap;letter-spacing:0.7px;margin-top:1px;text-align:left">NO</div></div>
<div class="a" style="left:558px;top:655px;width:85px;height:146px;display:flex;flex-direction:column;justify-content:center;align-items:flex-start;padding:0 0 0 1px"><div style="font-size:11.5px;line-height:16px;color:#3c3c3c;white-space:nowrap;letter-spacing:0.7px;margin-top:1px;text-align:left">Infima<br>Cuantía</div></div>
<div class="a" style="left:645px;top:655px;width:120px;height:146px;display:flex;flex-direction:column;justify-content:center;align-items:flex-start;padding:0 0 0 1px"><div style="font-size:11.5px;line-height:16px;color:#3c3c3c;white-space:nowrap;letter-spacing:0.7px;margin-top:1px;text-align:left">Egresos por<br>impresión de<br>GACETA<br>INSTITUCIONAL del<br>CAD Parroquial<br>de San Juan<br>para difusión<br>de actividades<br>&nbsp;</div></div>
<div class="a" style="left:767px;top:655px;width:49px;height:146px;display:flex;flex-direction:column;justify-content:center;align-items:flex-end;padding:0 9px 0 1px"><div style="font-size:11.5px;line-height:16px;color:#3c3c3c;white-space:nowrap;letter-spacing:0.7px;margin-top:1px;text-align:right">1.00</div></div>
<div class="a" style="left:818px;top:655px;width:43px;height:146px;display:flex;flex-direction:column;justify-content:center;align-items:flex-start;padding:0 0 0 1px"><div style="font-size:11.5px;line-height:16px;color:#3c3c3c;white-space:nowrap;letter-spacing:0.7px;margin-top:1px;text-align:left">Unidad</div></div>
<div class="a" style="left:863px;top:655px;width:66px;height:146px;display:flex;flex-direction:column;justify-content:center;align-items:flex-end;padding:0 0.5px 0 1px"><div style="font-size:11.5px;line-height:16px;color:#3c3c3c;white-space:nowrap;letter-spacing:0.7px;margin-top:1px;text-align:right">1,785.7100</div></div>
<div class="a" style="left:931px;top:655px;width:52px;height:146px;display:flex;flex-direction:column;justify-content:center;align-items:flex-end;padding:0 0.5px 0 1px"><div style="font-size:11.5px;line-height:16px;color:#3c3c3c;white-space:nowrap;letter-spacing:0.7px;margin-top:1px;text-align:right">1,785.71</div></div>
<div class="a" style="left:985px;top:655px;width:46px;height:146px;display:flex;flex-direction:column;justify-content:center;align-items:flex-start;padding:0 0 0 1px"><div style="font-size:11.5px;line-height:16px;color:#3c3c3c;white-space:nowrap;letter-spacing:0.7px;margin-top:1px;text-align:left">C1 C2<br>C3</div></div>
<div class="a" style="left:1031px;top:716px"><svg width="26" height="26" viewBox="0 0 26 26"><defs><linearGradient id="pg3" x1="0" y1="0" x2="1" y2="0"><stop offset="0" stop-color="#f0a020"/><stop offset="0.45" stop-color="#ffd050"/><stop offset="1" stop-color="#e88a10"/></linearGradient></defs><g transform="rotate(45 13 13)"><rect x="9.3" y="-1.5" width="7.4" height="19" rx="2" fill="url(#pg3)" stroke="#d07a10" stroke-width="0.7"/><path d="M9.3 17.5 L16.7 17.5 L13 25.5 Z" fill="#f4caa0" stroke="#c88a58" stroke-width="0.5"/><path d="M11.8 23 L14.2 23 L13 25.8Z" fill="#1a1a1a"/></g></svg></div>
<div class="a" style="left:1078px;top:717px"><svg width="22" height="22" viewBox="0 0 22 22"><ellipse cx="11" cy="21.3" rx="4" ry="0.8" fill="#aaa"/><path d="M1.5 4.5 L4.5 1.5 L11 8 L17.5 1.5 L20.5 4.5 L14 11 L20.5 17.5 L17.5 20.5 L11 14 L4.5 20.5 L1.5 17.5 L8 11 Z" fill="#e02424" stroke="#a81818" stroke-width="0.9" stroke-linejoin="round"/><path d="M3.5 4.5 L4.5 3.5 L11 10 L17.5 3.5" stroke="#f47a7a" stroke-width="0.9" fill="none"/></svg></div>
<div class="a" style="left:1135px;top:716px"><svg width="24" height="24" viewBox="0 0 24 24"><path d="M2 2 H18.3 V22.2 H4.6 L2 19.6 Z" fill="#f2f9ff" stroke="#11579c" stroke-width="2"/><path d="M5.3 7.2 H14.2" stroke="#11579c" stroke-width="1.7"/><path d="M5.3 12 H14.2" stroke="#8fa3bd" stroke-width="1.6"/><path d="M6 14.6 Q9 16 13.8 19.2 L22.2 9.4" stroke="#11579c" stroke-width="3.4" fill="none" stroke-linejoin="round"/></svg></div>
<div class="a" style="left:1207px;top:716px"><svg width="24" height="24" viewBox="0 0 24 24"><path d="M2 2 H18.3 V22.2 H4.6 L2 19.6 Z" fill="#f2f9ff" stroke="#11579c" stroke-width="2"/><path d="M5.3 7.2 H14.2" stroke="#11579c" stroke-width="1.7"/><path d="M5.3 12 H14.2" stroke="#8fa3bd" stroke-width="1.6"/><path d="M6 14.6 Q9 16 13.8 19.2 L22.2 9.4" stroke="#11579c" stroke-width="3.4" fill="none" stroke-linejoin="round"/></svg></div>
<div class="a" style="left:1255px;top:711px"><svg width="36" height="36" viewBox="0 0 36 36"><defs><linearGradient id="cg3" x1="0" y1="0" x2="0.3" y2="1"><stop offset="0" stop-color="#b8cdf4"/><stop offset="1" stop-color="#f0f5ff"/></linearGradient></defs><path d="M2.2 5.3 L19.4 1.7 Q19 12 20 22 L5.9 25 Q3 15 2.2 5.3Z" fill="url(#cg3)" stroke="#5868b8" stroke-width="1.3" stroke-linejoin="round"/><path d="M6 12 L16 10 M6.8 16 L16.5 14 M7.5 20 L17 18" stroke="#7888cc" stroke-width="0.9"/><path d="M11 11.3 L28.3 7.7 Q28 17 33 27.2 L14.2 31.4 Q14 21 11 11.3Z" fill="url(#cg3)" stroke="#5868b8" stroke-width="1.4" stroke-linejoin="round"/><path d="M15 18.5 L26 16 M15.6 22.5 L27 20 M16.3 26.3 L28 24 M17 30 L29.5 27.5" stroke="#6a7cc8" stroke-width="1"/></svg></div>
<div class="a" style="left:1334px;top:466px;width:15px;height:29px;background:rgba(120,120,190,0.8)"></div>
<svg class="a" style="left:1307px;top:459px" width="42" height="42" viewBox="0 0 42 42"><circle cx="21" cy="21" r="19" fill="rgb(92,92,172)" fill-opacity="0.66" stroke="rgba(205,205,222,0.9)" stroke-width="1.8"/><circle cx="18" cy="23" r="8.5" fill="none" stroke="#fff" stroke-width="1.6"/><path d="M22 17 Q27 13 33 9 Q32 13 30 15 Q33 14 33 14 Q31 19 27 20 Q29 21 28 23 Q26 21 22 17Z" fill="#fff" fill-opacity="0.9"/></svg>
<div class="a" style="left:0;top:728px;width:1366px;height:40px;background:#1f303b"></div>
<div class="a" style="left:148px;top:728px;width:48px;height:40px;background:#a86a34"></div>
<div class="a" style="left:148px;top:766px;width:48px;height:2px;background:#ff8a20"></div>
<div class="a" style="left:393px;top:728px;width:48px;height:40px;background:#4a565e"></div>
<div class="a" style="left:202px;top:766px;width:38px;height:2px;background:#8ec4f0"></div>
<div class="a" style="left:251px;top:766px;width:38px;height:2px;background:#8ec4f0"></div>
<div class="a" style="left:349px;top:766px;width:38px;height:2px;background:#8ec4f0"></div>
<div class="a" style="left:398px;top:766px;width:38px;height:2px;background:#8ec4f0"></div>
<div class="a" style="left:447px;top:766px;width:38px;height:2px;background:#8ec4f0"></div>
<div class="a" style="left:496px;top:766px;width:38px;height:2px;background:#8ec4f0"></div>
<div class="a" style="left:545px;top:766px;width:38px;height:2px;background:#8ec4f0"></div>
<svg class="a" style="left:16px;top:740px" width="17" height="17" viewBox="0 0 17 17"><path d="M0 2.3 L7 1.3 V8 H0Z M8 1.2 L17 0 V8 H8Z M0 9 H7 V15.7 L0 14.7Z M8 9 H17 V17 L8 15.8Z" fill="#fff"/></svg>
<svg class="a" style="left:60px;top:737px" width="22" height="22" viewBox="0 0 22 22"><circle cx="13" cy="9" r="7" fill="none" stroke="#fff" stroke-width="2"/><path d="M8 14 L2 20" stroke="#fff" stroke-width="2.2" stroke-linecap="round"/></svg>
<svg class="a" style="left:110px;top:735px" width="26" height="26" viewBox="0 0 26 26"><defs><linearGradient id="ieg" x1="0" y1="0" x2="0" y2="1"><stop offset="0" stop-color="#7ad8fa"/><stop offset="1" stop-color="#1e9ee0"/></linearGradient></defs><path d="M13 4.5 A9 9 0 1 0 21.5 16 H16.5 A4.5 4.5 0 0 1 8.5 15 H22 Q22.5 4.5 13 4.5Z M8.7 11.5 A4.3 4.3 0 0 1 17.3 11.5Z" fill="url(#ieg)" fill-rule="evenodd"/><path d="M2.5 23 Q0 20 6 12 Q14 3 22 2 Q25 2 23.5 6" fill="none" stroke="#f0c030" stroke-width="1.6"/></svg>
<svg class="a" style="left:159px;top:735px" width="26" height="26" viewBox="0 0 26 26"><defs><linearGradient id="eg" x1="0.2" y1="0.1" x2="0.9" y2="0.7"><stop offset="0" stop-color="#2aa8e8"/><stop offset="0.5" stop-color="#30c8c0"/><stop offset="1" stop-color="#5ad860"/></linearGradient><linearGradient id="eg2" x1="0" y1="0" x2="1" y2="1"><stop offset="0" stop-color="#1a8ae0"/><stop offset="1" stop-color="#0c4aa8"/></linearGradient></defs><path d="M2 12.5 A11 11 0 0 1 24 12 Q24 17 19.5 17.5 Q15 18 14 15 Q16.5 14 16 11.5 Q15 8.5 11 8.5 Q4.5 8.5 2 12.5Z" fill="url(#eg)"/><path d="M2 12.5 Q4.5 8.5 11 8.5 Q6.5 11 7.5 16 Q9 21 15.5 21 Q19 21 22.5 18.5 A11 11 0 0 1 2 12.5Z" fill="url(#eg2)"/></svg>
<svg class="a" style="left:208px;top:736px" width="25" height="25" viewBox="0 0 25 25"><circle cx="12.5" cy="12.5" r="11.5" fill="#e53a2e"/><path d="M12.5 12.5 L2.5 18.3 A11.5 11.5 0 0 0 18.2 22.5Z" fill="#2ea652"/><path d="M12.5 12.5 L18.2 22.5 A11.5 11.5 0 0 0 22.5 7 Z" fill="#f9c21a"/><circle cx="12.5" cy="12.5" r="5.2" fill="#fff"/><circle cx="12.5" cy="12.5" r="4" fill="#2b78e4"/></svg>
<svg class="a" style="left:257px;top:738px" width="24" height="21" viewBox="0 0 24 21"><path d="M0 1 H9 L11 3 H24 V20 H0Z" fill="#e8b830"/><rect x="0" y="5" width="24" height="15" fill="#f8d468"/><path d="M8 20 V13 H16 V20 H14 V15 H10 V20Z" fill="#3a8ad8"/></svg>
<svg class="a" style="left:306px;top:737px" width="24" height="22" viewBox="0 0 24 22"><path d="M0 8 L12 0 L24 8 V22 H0Z" fill="#1f7fd6"/><path d="M0 8 L12 15 L24 8 V22 H0Z" fill="#3ab0f0"/><path d="M3 8 L12 13.5 L21 8Z" fill="#fff"/></svg>
<svg class="a" style="left:356px;top:737px" width="22" height="22" viewBox="0 0 22 22"><rect width="22" height="22" rx="3" fill="#c7160e"/><path d="M5 16 Q9 10 11 4 Q12 8 17 13 Q11 12 5 16Z" fill="none" stroke="#fff" stroke-width="1.3"/></svg>
<svg class="a" style="left:404px;top:735px" width="26" height="26" viewBox="0 0 24 24"><defs><linearGradient id="ffb" x1="0.8" y1="0" x2="0.3" y2="1"><stop offset="0" stop-color="#ffe838"/><stop offset="0.45" stop-color="#ff9a28"/><stop offset="0.8" stop-color="#ff3a48"/><stop offset="1" stop-color="#e8206a"/></linearGradient><radialGradient id="ffbp" cx="0.4" cy="0.6" r="0.7"><stop offset="0" stop-color="#6a48e8"/><stop offset="1" stop-color="#9a40d8"/></radialGradient></defs><path d="M16 1.5 Q19 4 20.5 7 Q23 10 22.5 14 A10.5 10.5 0 0 1 1.5 13.5 Q1.5 9 4.5 6 L5.5 3.5 L6.8 5.5 L8.5 4.5 L9 6.5 Q11.5 5.5 14 6 Q15.5 3.5 16 1.5Z" fill="url(#ffb)"/><circle cx="12" cy="13.5" r="5.3" fill="url(#ffbp)"/><path d="M4.5 8 Q7 6.5 10 8 Q12.5 9.5 11 11 Q9.5 12 7.5 12.5 Q6.5 16 9 18 Q5 17 4.5 13Z" fill="#ff9a30"/></svg>
<svg class="a" style="left:454px;top:736px" width="24" height="24" viewBox="0 0 24 24"><defs><linearGradient id="dkbg" x1="0" y1="0" x2="0" y2="1"><stop offset="0" stop-color="#f4f4f8"/><stop offset="1" stop-color="#d8d8e0"/></linearGradient></defs><rect width="24" height="24" rx="2" fill="url(#dkbg)"/><path d="M11 3 Q16 9 17.5 13 Q20 19 16 21 Q11 22.5 7 21 Q4 19 6.5 13 Q8.5 8 11 3Z" fill="#fff" stroke="#c0c0c8" stroke-width="0.6"/><path d="M11 3 Q14 7 15.5 10.5 Q11 12 7.5 10.5 Q9 6 11 3Z" fill="#1a1a1a"/><circle cx="11" cy="9.5" r="2.3" fill="#d82828"/><path d="M7 12 Q3 12 2.5 15 M16.5 12 Q20 11 20.5 8" stroke="#555" stroke-width="1.1" fill="none"/></svg>
<svg class="a" style="left:502px;top:737px" width="25" height="22" viewBox="0 0 25 22"><rect x="6" y="0" width="19" height="22" rx="1.5" fill="#2b7cd3"/><rect x="6" y="0" width="19" height="7" fill="#41a5ee"/><rect x="6" y="14" width="19" height="8" fill="#185abd"/><rect x="0" y="5" width="13" height="13" rx="1.5" fill="#185abd"/><path d="M2 8 L3.7 15 L5.5 10 L7.3 15 L9 8" stroke="#fff" stroke-width="1.4" fill="none"/></svg>
<svg class="a" style="left:551px;top:737px" width="25" height="22" viewBox="0 0 25 22"><rect x="6" y="0" width="19" height="22" rx="1.5" fill="#21a366"/><rect x="6" y="0" width="19" height="7" fill="#33c481"/><rect x="6" y="14" width="19" height="8" fill="#107c41"/><rect x="0" y="5" width="13" height="13" rx="1.5" fill="#107c41"/><path d="M3 8 L9 15 M9 8 L3 15" stroke="#fff" stroke-width="1.5"/></svg>
<svg class="a" style="left:900px;top:736px" width="28" height="24" viewBox="0 0 28 24"><path d="M4 22 Q0 22 1 18 Q2 14 7 15 Q8 9 14 9 Q20 9 21 15 Q26 15 26 19 Q26 22 22 22Z" fill="#c4d4f0"/><circle cx="20" cy="7" r="5" fill="#d83a2e"/><text x="20" y="10" font-size="8" fill="#fff" text-anchor="middle" font-family="Liberation Sans">1</text></svg>
<div class="t" style="left:933px;top:740px;font-size:14px;color:#fff">29°C &nbsp;Mayorm. nubla...</div>
<svg class="a" style="left:1097px;top:743px" width="14" height="8" viewBox="0 0 14 8"><path d="M1 7 L7 1 L13 7" stroke="#fff" stroke-width="1.3" fill="none"/></svg>
<svg class="a" style="left:1120px;top:740px" width="17" height="17" viewBox="0 0 17 17"><circle cx="8.5" cy="8.5" r="8" fill="#e8d848"/><path d="M8.5 4 V13 M4 8.5 H13" stroke="#2a9a3a" stroke-width="2.6"/></svg>
<svg class="a" style="left:1144px;top:740px" width="18" height="17" viewBox="0 0 18 17"><path d="M1 6 H4 L8 2 V15 L4 11 H1Z" fill="none" stroke="#fff" stroke-width="1.1"/><path d="M11 5.5 Q13 8.5 11 11.5 M13.5 3.5 Q16.5 8.5 13.5 13.5" stroke="#fff" stroke-width="1.1" fill="none"/></svg>
<svg class="a" style="left:1169px;top:740px" width="18" height="17" viewBox="0 0 18 17"><rect x="2" y="4" width="9" height="9" rx="2" fill="none" stroke="#fff" stroke-width="1.2"/><path d="M11 7 L15 5 V12 L11 10" fill="none" stroke="#fff" stroke-width="1.2"/></svg>
<svg class="a" style="left:1194px;top:740px" width="18" height="17" viewBox="0 0 18 17"><path d="M2 10 A10 10 0 0 1 16 3 M5 12 A7 7 0 0 1 15 7 M8 14 A4 4 0 0 1 14 11" stroke="#aaa" stroke-width="1.2" fill="none"/><circle cx="15" cy="15" r="1.5" fill="#fff"/></svg>
<div class="t" style="left:1221px;top:740px;font-size:12.5px;color:#fff">ESP</div>
<div class="t" style="left:1267px;top:731px;font-size:12.5px;color:#fff">13:53</div>
<div class="t" style="left:1255px;top:749px;font-size:12.5px;color:#fff">28/5/2024</div>
<svg class="a" style="left:1323px;top:738px" width="30" height="26" viewBox="0 0 30 26"><path d="M2 1 H20 V13 H8 L4 17 V13 H2Z" fill="#fff"/><path d="M5 5 H17 M5 8 H17 M5 11 H13" stroke="#1e2b38" stroke-width="1"/><circle cx="19" cy="17" r="7" fill="#333" stroke="#888" stroke-width="1"/><text x="19" y="21" font-size="11" fill="#fff" text-anchor="middle" font-family="Liberation Sans">3</text></svg>
<div class="a" style="left:1361px;top:728px;width:1px;height:40px;background:#555"></div>
</body></html>
